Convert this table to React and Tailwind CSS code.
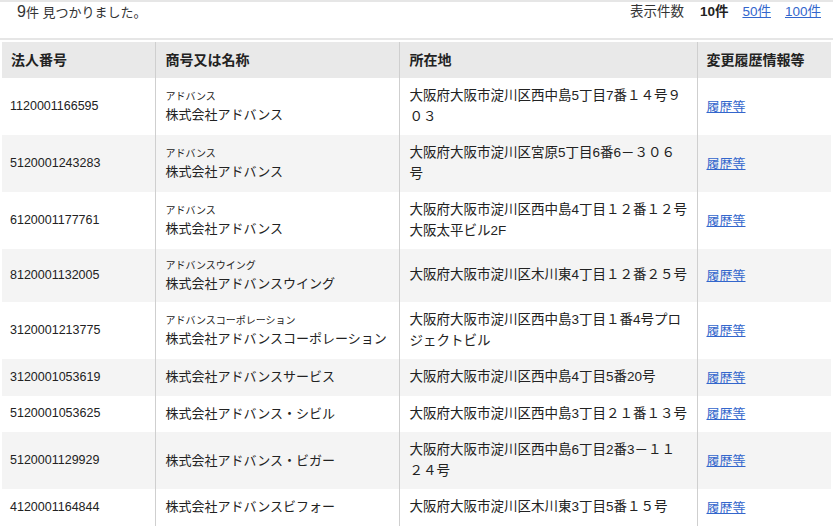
import React from "react";

const rows = [
  { no: "1120001166595", kana: "アドバンス", name: "株式会社アドバンス", addr: ["大阪府大阪市淀川区西中島5丁目7番１４号９", "０３"] },
  { no: "5120001243283", kana: "アドバンス", name: "株式会社アドバンス", addr: ["大阪府大阪市淀川区宮原5丁目6番6－３０６", "号"] },
  { no: "6120001177761", kana: "アドバンス", name: "株式会社アドバンス", addr: ["大阪府大阪市淀川区西中島4丁目１２番１２号", "大阪太平ビル2F"] },
  { no: "8120001132005", kana: "アドバンスウイング", name: "株式会社アドバンスウイング", addr: ["大阪府大阪市淀川区木川東4丁目１２番２５号"] },
  { no: "3120001213775", kana: "アドバンスコーポレーション", name: "株式会社アドバンスコーポレーション", addr: ["大阪府大阪市淀川区西中島3丁目１番4号プロ", "ジェクトビル"] },
  { no: "3120001053619", kana: null, name: "株式会社アドバンスサービス", addr: ["大阪府大阪市淀川区西中島4丁目5番20号"] },
  { no: "5120001053625", kana: null, name: "株式会社アドバンス・シビル", addr: ["大阪府大阪市淀川区西中島3丁目２１番１３号"] },
  { no: "5120001129929", kana: null, name: "株式会社アドバンス・ビガー", addr: ["大阪府大阪市淀川区西中島6丁目2番3－１１", "２４号"] },
  { no: "4120001164844", kana: null, name: "株式会社アドバンスビフォー", addr: ["大阪府大阪市淀川区木川東3丁目5番１５号"] },
];

export default function App() {
  return (
    <div
      className="w-[833px] h-[527px] overflow-hidden bg-white text-[#222]"
      style={{ fontFamily: '"Liberation Sans", "Noto Sans CJK JP", sans-serif' }}
    >
      <div className="border-t-2 border-b-2 border-[#e6e6e6] h-[40px] flex justify-between items-start pt-[1px]">
        <div className="pl-[17px] text-[13px] leading-[18px] text-[#333]">
          <span className="text-[16px]">9</span>件 見つかりました。
        </div>
        <div className="flex items-center gap-[14px] pr-[12px] text-[13.5px] leading-[18px] text-[#333]">
          <span className="mr-[2px]">表示件数</span>
          <span className="font-bold text-[#222]">10件</span>
          <a className="text-[#3366cc] underline">50件</a>
          <a className="text-[#3366cc] underline">100件</a>
        </div>
      </div>
      <table className="ml-[2px] mt-[2px] w-[829px] table-fixed border-collapse">
        <colgroup>
          <col className="w-[153px]" />
          <col className="w-[244px]" />
          <col className="w-[298px]" />
          <col className="w-[134px]" />
        </colgroup>
        <thead>
          <tr className="bg-[#e9e9e9] h-[36px]">
            <th className="text-left font-bold text-[14px] pl-[9px] align-middle">法人番号</th>
            <th className="text-left font-bold text-[14px] pl-[10px] border-l border-[#cfcfcf] align-middle">商号又は名称</th>
            <th className="text-left font-bold text-[14px] pl-[10px] border-l border-[#cfcfcf] align-middle">所在地</th>
            <th className="text-left font-bold text-[14px] pl-[9px] border-l border-[#cfcfcf] align-middle">変更履歴情報等</th>
          </tr>
        </thead>
        <tbody>
          {rows.map((r, i) => (
            <tr key={r.no} className={i % 2 === 1 ? "bg-[#f4f4f4]" : "bg-white"}>
              <td className="pl-[8px] py-[8px] align-middle text-[12.5px] text-[#222]">{r.no}</td>
              <td className="pl-[10px] py-[8px] align-middle border-l border-[#cfcfcf] whitespace-nowrap">
                {r.kana && <div className="text-[10px] leading-[17px] text-[#222]">{r.kana}</div>}
                <div className="text-[13px] leading-[20px]">{r.name}</div>
              </td>
              <td className="pl-[10px] py-[8px] align-middle border-l border-[#cfcfcf] whitespace-nowrap text-[13.5px] leading-[20.5px]">
                {r.addr.map((l, j) => (
                  <div key={j}>{l}</div>
                ))}
              </td>
              <td className="pl-[9px] py-[8px] align-middle border-l border-[#cfcfcf] text-[13px]">
                <a className="text-[#3366cc] underline">履歴等</a>
              </td>
            </tr>
          ))}
        </tbody>
      </table>
    </div>
  );
}
